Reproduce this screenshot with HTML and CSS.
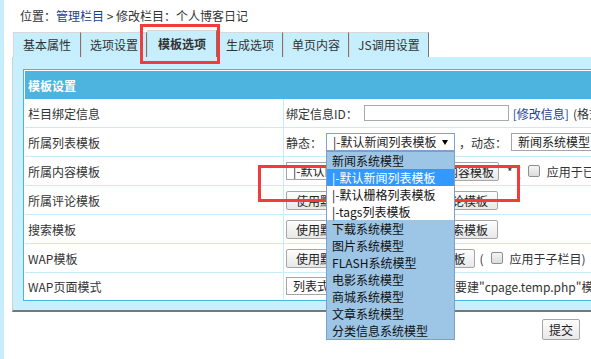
FILE: index.html
```html
<!DOCTYPE html>
<html lang="zh-CN">
<head>
    <meta charset="UTF-8">
    <meta name="viewport" content="width=device-width, initial-scale=1.0">
    <title>修改栏目</title>
    <link rel="stylesheet" href="styles.css">
</head>
<body>

<div class="page">
    <div class="crumb">位置：<a href="#">管理栏目</a> &gt; 修改栏目：个人博客日记</div>

    <ul class="tabs">
        <li>基本属性</li>
        <li>选项设置</li>
        <li class="active">模板选项</li>
        <li>生成选项</li>
        <li>单页内容</li>
        <li>JS调用设置</li>
    </ul>

    <div class="panel">
        <table class="form">
            <tr>
                <th colspan="2">模板设置</th>
            </tr>
            <tr>
                <td class="label">栏目绑定信息</td>
                <td class="value">
                    <div class="field">
                        <span>绑定信息ID：</span>
                        <input type="text" class="text text-id">
                        <a href="#" class="link">[修改信息]</a>
                        <span>(格式：数字ID，多个用逗号隔开)</span>
                    </div>
                </td>
            </tr>
            <tr>
                <td class="label">所属列表模板</td>
                <td class="value">
                    <div class="field">
                        <span>静态：</span>
                        <span class="select-wrap">
                            <select class="sel sel-focus"><option>|-默认新闻列表模板</option></select>
                            <!-- open option list -->
                            <ul class="dropdown">
                                <li class="group">新闻系统模型</li>
                                <li class="selected">|-默认新闻列表模板</li>
                                <li>|-默认栅格列表模板</li>
                                <li>|-tags列表模板</li>
                                <li class="group">下载系统模型</li>
                                <li class="group">图片系统模型</li>
                                <li class="group">FLASH系统模型</li>
                                <li class="group">电影系统模型</li>
                                <li class="group">商城系统模型</li>
                                <li class="group">文章系统模型</li>
                                <li class="group">分类信息系统模型</li>
                            </ul>
                        </span>
                        <span>，动态：</span>
                        <select class="sel sel-dyn"><option>新闻系统模型</option></select>
                    </div>
                </td>
            </tr>
            <tr>
                <td class="label">所属内容模板</td>
                <td class="value">
                    <div class="field">
                        <select class="sel sel-tpl"><option>|-默认内容模板</option></select>
                        <button class="btn btn-tight">选择内容模板</button>
                        <span class="req">*</span>
                        <span>(</span>
                        <input type="checkbox" class="check">
                        <span class="check-text">应用于已有子栏目)</span>
                    </div>
                </td>
            </tr>
            <tr>
                <td class="label">所属评论模板</td>
                <td class="value">
                    <div class="field">
                        <button class="btn">使用默认评论模板</button>
                        <button class="btn">选择评论模板</button>
                    </div>
                </td>
            </tr>
            <tr>
                <td class="label">搜索模板</td>
                <td class="value">
                    <div class="field">
                        <button class="btn">使用默认搜索模板</button>
                        <button class="btn">选择搜索模板</button>
                    </div>
                </td>
            </tr>
            <tr>
                <td class="label">WAP模板</td>
                <td class="value">
                    <div class="field">
                        <button class="btn">使用默认模板</button>
                        <button class="btn">选择WAP模板</button>
                        <span>(</span>
                        <input type="checkbox" class="check">
                        <span class="check-text">应用于子栏目)</span>
                    </div>
                </td>
            </tr>
            <tr>
                <td class="label">WAP页面模式</td>
                <td class="value">
                    <div class="field">
                        <select class="sel sel-mode"><option>列表式</option></select>
                        <span>（列表式需要建"cpage.temp.php"模板）</span>
                    </div>
                </td>
            </tr>
        </table>
    </div>

    <div class="actions">
        <button class="btn btn-submit">提交</button>
    </div>

    <div class="mark"></div>
</div>

</body>
</html>
```

FILE: styles.css
```css
html, body {
    overflow: hidden;
}

body {
    margin: 0;
    min-height: 100vh;
    border-left: 4px solid #c6edfb;
    background: #fff;
    color: #333;
    font-family: "Noto Sans CJK SC", "Microsoft YaHei", sans-serif;
    font-size: 12px;
}

.page {
    position: relative;
    padding-left: 8px;
}

.crumb {
    padding: 8px 0 0 8px;
    line-height: 16px;
}

.crumb a {
    color: #1b3f8f;
    text-decoration: none;
}

/* tabs */
.tabs {
    display: flex;
    align-items: flex-end;
    list-style: none;
    margin: 6px 0 0 1px;
    padding: 0;
}

.tabs li {
    height: 24px;
    line-height: 24px;
    padding: 0 8px;
    background: #c6eefd;
    border-top: 1px solid #d8d8d8;
    border-left: 1px solid #d8d8d8;
    border-right: 1px solid #777;
}

.tabs li:first-child {
    padding: 0 9px;
}

.tabs li.active {
    position: relative;
    height: 26px;
    line-height: 26px;
    padding: 0 10px;
    font-weight: bold;
}

/* red highlight round the active tab */
.tabs li.active::after {
    content: "";
    position: absolute;
    left: -8px;
    right: -4px;
    top: -7px;
    bottom: -7px;
    border: 3px solid #f23b3b;
}

/* panel + table */
.panel {
    width: 900px;
    padding: 12px 0 9px 10px;
    background: #c8effd;
    border-left: 1px solid #d2d2d2;
    border-bottom: 2px solid #777;
}

.form {
    width: 880px;
    padding: 1px;
    border: 1px solid #4cb4de;
    border-spacing: 0;
    background: #fff;
}

.form th {
    height: 28px;
    padding: 0 3px;
    text-align: left;
    background: #4cb4de;
    color: #fff;
    font-weight: bold;
}

.form td {
    height: 28px;
    padding: 0;
    border-bottom: 1px solid #c6ecfb;
    white-space: nowrap;
}

.form tr:last-child td {
    height: 26px;
    border-bottom: 0;
}

.form td.label {
    width: 255px;
    padding-left: 3px;
    border-right: 1px solid #c6ecfb;
}

.form td.value {
    padding-left: 2px;
}

.field {
    display: flex;
    align-items: center;
    gap: 4px;
}

.link {
    color: #1c3f94;
    text-decoration: none;
}

/* controls */
.text {
    box-sizing: border-box;
    height: 16px;
    padding: 0 3px;
    border: 1px solid #a9a9a9;
    font: inherit;
}

.text-id {
    width: 145px;
    margin-left: 2px;
}

.sel {
    -webkit-appearance: none;
    appearance: none;
    box-sizing: border-box;
    height: 18px;
    padding: 0 6px;
    border: 1px solid #a5a5a5;
    border-radius: 0;
    background: #fff;
    color: #222;
    font: inherit;
    line-height: 16px;
}

.sel-focus {
    width: 129px;
    border-color: #7da2ce;
}

.sel-dyn {
    width: 140px;
}

.sel-tpl {
    width: 127px;
}

.sel-mode {
    width: 105px;
}

.btn {
    box-sizing: border-box;
    height: 19px;
    padding: 0 9px;
    border: 1px solid #a6a6a6;
    border-radius: 2px;
    background: linear-gradient(#fdfdfd, #e8e8e8);
    color: #222;
    font: inherit;
    line-height: 17px;
}

.btn-tight {
    padding: 0 4px;
}

.check {
    -webkit-appearance: none;
    appearance: none;
    width: 12px;
    height: 12px;
    margin: 0 0 0 3px;
    border: 1px solid #8e8e8e;
    border-radius: 2px;
    background: linear-gradient(#f5f5f5, #dcdcdc);
}

.check-text {
    margin-left: 3px;
}

.req {
    margin-left: 4px;
}

/* open select list */
.select-wrap {
    position: relative;
    display: inline-block;
}

.select-wrap::after {
    content: "";
    position: absolute;
    right: 7px;
    top: 7px;
    border-left: 3.5px solid transparent;
    border-right: 3.5px solid transparent;
    border-top: 5px solid #000;
}

.dropdown {
    position: absolute;
    left: 0;
    top: 100%;
    z-index: 2;
    box-sizing: border-box;
    width: 129px;
    margin: 0;
    padding: 0;
    list-style: none;
    border: 1px solid #7f9dc9;
    background: #fff;
}

.dropdown li {
    height: 17px;
    line-height: 17px;
    padding-left: 5px;
    color: #111;
}

.dropdown .group {
    background: #9dc5e5;
}

.dropdown .selected {
    background: #3399ff;
    color: #fff;
}

/* bottom */
.actions {
    padding: 7px 11px 0 0;
    text-align: right;
}

.btn-submit {
    height: 21px;
    padding: 0 6px;
    line-height: 19px;
}

/* red highlight over rows 3-4 */
.mark {
    position: absolute;
    left: 254px;
    top: 165px;
    z-index: 1;
    box-sizing: border-box;
    width: 262px;
    height: 37px;
    border: 3px solid #f23b3b;
}
```
